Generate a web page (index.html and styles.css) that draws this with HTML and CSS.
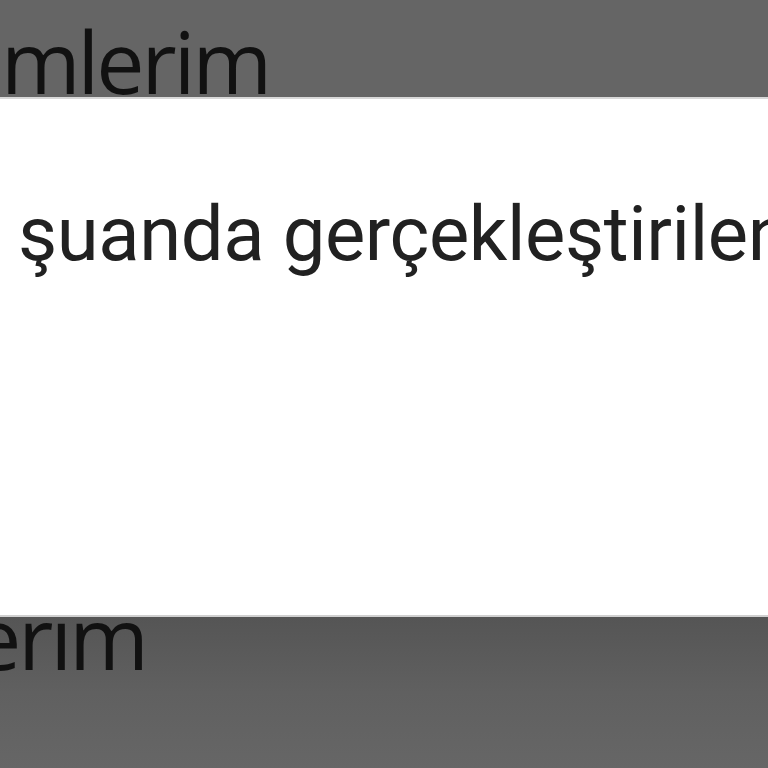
FILE: index.html
```html
<!DOCTYPE html>
<html lang="tr">
<head>
<meta charset="utf-8">
<title>İşlemlerim</title>
<link rel="stylesheet" href="styles.css">
</head>
<body>
<div class="screen">
  <header class="top-bar">
    <span class="big-title top-title">mlerim</span>
  </header>
  <section class="sheet">
    <p class="message">şuanda gerçekleştirilen</p>
  </section>
  <footer class="bottom-bar">
    <span class="big-title bottom-title">erim</span>
  </footer>
</div>
</body>
</html>
```

FILE: styles.css
```css
html, body {
  margin: 0;
  padding: 0;
  width: 768px;
  height: 768px;
  overflow: hidden;
  background: #646464;
}

.screen {
  display: flex;
  flex-direction: column;
  width: 768px;
  height: 768px;
  overflow: hidden;
}

.top-bar {
  height: 97px;
  flex: 0 0 97px;
  background: #656565;
  overflow: hidden;
  display: flex;
  align-items: flex-start;
}

.big-title {
  font-family: "Open Sans", sans-serif;
  font-size: 86px;
  letter-spacing: -3px;
  line-height: 1;
  color: #111111;
  white-space: nowrap;
}

.top-title {
  margin-top: 18px;
  padding-left: 1px;
}

.sheet {
  flex: 0 0 520px;
  height: 520px;
  background: #ffffff;
  border-top: 2px solid #d8d8d8;
  border-bottom: 2px solid #d0d0d0;
  box-sizing: border-box;
  overflow: hidden;
}

.message {
  margin: 90px 0 0 18px;
  font-family: Roboto, sans-serif;
  font-size: 76px;
  letter-spacing: -0.4px;
  line-height: 1.2;
  color: #212121;
  white-space: nowrap;
}

.bottom-bar {
  flex: 1 1 auto;
  background: linear-gradient(to bottom, #555555 0%, #606060 50%, #666666 100%);
  overflow: hidden;
  display: flex;
  align-items: flex-start;
}

.bottom-title {
  margin-left: -27px;
  margin-top: -23px;
}
```
